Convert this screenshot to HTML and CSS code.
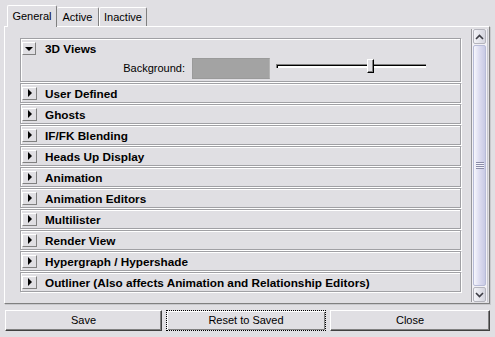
FILE: index.html
```html
<!DOCTYPE html>
<html>
<head>
<meta charset="utf-8">
<title>Preferences</title>
<link rel="stylesheet" href="styles.css">
</head>
<body>
	<div class="tabs">
		<div class="tab selected">General</div>
		<div class="tab tab_active">Active</div>
		<div class="tab tab_inactive">Inactive</div>
	</div>
	<div class="panel">
		<div class="frames">
			<div class="frame open">
				<div class="frame_title">
					<span class="toggle"><span class="arrow_down"></span></span>
					<span class="label">3D Views</span>
				</div>
				<div class="frame_body">
					<span class="field_label">Background:</span>
					<span class="swatch"></span>
					<span class="slider">
						<span class="track"></span>
						<span class="thumb"></span>
					</span>
				</div>
			</div>
			<div class="frame"><div class="frame_title"><span class="toggle"><span class="arrow_right"></span></span><span class="label">User Defined</span></div></div>
			<div class="frame"><div class="frame_title"><span class="toggle"><span class="arrow_right"></span></span><span class="label">Ghosts</span></div></div>
			<div class="frame"><div class="frame_title"><span class="toggle"><span class="arrow_right"></span></span><span class="label">IF/FK Blending</span></div></div>
			<div class="frame"><div class="frame_title"><span class="toggle"><span class="arrow_right"></span></span><span class="label">Heads Up Display</span></div></div>
			<div class="frame"><div class="frame_title"><span class="toggle"><span class="arrow_right"></span></span><span class="label">Animation</span></div></div>
			<div class="frame"><div class="frame_title"><span class="toggle"><span class="arrow_right"></span></span><span class="label">Animation Editors</span></div></div>
			<div class="frame"><div class="frame_title"><span class="toggle"><span class="arrow_right"></span></span><span class="label">Multilister</span></div></div>
			<div class="frame"><div class="frame_title"><span class="toggle"><span class="arrow_right"></span></span><span class="label">Render View</span></div></div>
			<div class="frame"><div class="frame_title"><span class="toggle"><span class="arrow_right"></span></span><span class="label">Hypergraph / Hypershade</span></div></div>
			<div class="frame"><div class="frame_title"><span class="toggle"><span class="arrow_right"></span></span><span class="label">Outliner (Also affects Animation and Relationship Editors)</span></div></div>
		</div>
		<div class="scrollbar">
			<div class="sb_button">
				<svg width="9" height="6" viewBox="0 0 9 6"><path d="M1 5 L4.5 1.5 L8 5" fill="none" stroke="#3c3c44" stroke-width="1.6"/></svg>
			</div>
			<div class="sb_thumb">
				<span class="grip"></span>
			</div>
			<div class="sb_button">
				<svg width="9" height="6" viewBox="0 0 9 6"><path d="M1 1 L4.5 4.5 L8 1" fill="none" stroke="#3c3c44" stroke-width="1.6"/></svg>
			</div>
		</div>
	</div>
	<div class="buttons">
		<div class="button save">Save</div>
		<div class="button default">Reset to Saved</div>
		<div class="button close">Close</div>
	</div>
</body>
</html>
```

FILE: styles.css
```css
* {box-sizing:border-box;}
body {margin:0; background:#e0dfe3; font-family:"Liberation Sans",Arial,sans-serif; font-size:11px; color:#000; height:337px; overflow:hidden;}

.tabs {display:flex; align-items:flex-end; height:26px; padding-left:7px; position:relative; z-index:1;}
.tab {height:19px; padding-top:3px; text-align:center; border:1px solid #fff; border-bottom:none; border-right:1px solid #808080; border-radius:2px 2px 0 0; background:#e0dfe3;}
.tab.selected {width:50px; height:22px; padding-top:4px; margin-bottom:-1px;}
.tab_active {width:42px; border-left:none;}
.tab_inactive {width:48px;}

.panel {display:flex; margin-left:4px; width:486px; height:278px; border:1px solid #fff; border-right-color:#808080; border-bottom-color:#808080; box-shadow:1px 1px 0 #c8c8cc;}
.frames {width:441px; margin-left:15px; padding-top:11px;}

.frame {height:20px; margin-bottom:1px; border:1px solid #a0a0a4; box-shadow:inset 1px 1px 0 #fff, 1px 1px 0 #fff;}
.frame.open {height:44px;}
.frame_title {display:flex; align-items:center; height:18px; padding-left:1px;}
.toggle {display:flex; align-items:center; justify-content:center; width:15px; height:13px; border:1px solid #fff; border-right-color:#808080; border-bottom-color:#808080;}
.open .toggle {width:14px; height:13px; margin-top:1px;}
.arrow_right {width:0; height:0; border-left:4px solid #000; border-top:4px solid transparent; border-bottom:4px solid transparent; margin-left:1px;}
.arrow_down {width:0; height:0; border-top:4px solid #000; border-left:4px solid transparent; border-right:4px solid transparent; margin-top:1px;}
.label {margin-left:8px; font-weight:bold; font-size:11.75px; white-space:nowrap;}
.open .label {margin-left:9px;}

.frame_body {display:flex; align-items:center; height:22px;}
.field_label {width:164px; text-align:right;}
.swatch {width:78px; height:21px; margin-left:7px; background:#a3a3a3; border:1px solid #9a9a9a; border-right-color:#b4b4b4;}
.slider {position:relative; width:150px; height:21px; margin-left:6px;}
.track {display:block; margin-top:6px; height:4px; border-top:1px solid #808080; border-left:1px solid #808080; background:#fff; box-shadow:inset 1px 1px 0 #000;}
.thumb {position:absolute; left:91px; top:1px; width:7px; height:14px; background:#e0dfe3; border:1px solid #fff; border-right-color:#000; border-bottom-color:#000; box-shadow:inset -1px -1px 0 #808080;}

.scrollbar {display:flex; flex-direction:column; width:17px; margin:2px 1px 1px auto; border-left:1px solid #98989c; border-right:1px solid #c8c8d0; background:#f2f1f5;}
.sb_button {display:flex; align-items:center; justify-content:center; height:15px; margin:0 1px; border:1px solid #b4b4bc; border-radius:2px; background:linear-gradient(to right,#f4f4f8,#d4d4de);}
.sb_thumb {flex:1; display:flex; align-items:center; justify-content:center; margin:1px 1px; border:1px solid #b8bcd8; border-radius:2px; background:linear-gradient(to right,#f6f6fc,#dcdcf0 50%,#c8cae4);}
.grip {width:8px; height:7px; background:repeating-linear-gradient(to bottom,#8a8ca8 0 1px,#f4f4fc 1px 2px);}

.buttons {display:flex; gap:4px; margin:6px 5px 0 5px;}
.button {height:21px; line-height:19px; text-align:center; border:1px solid #fff; border-right-color:#404040; border-bottom-color:#404040; box-shadow:inset -1px -1px 0 #808080;}
.button.save {width:157px;}
.button.default {width:160px; border:1px dotted #000; box-shadow:inset 1px 1px 0 #fff, inset -1px -1px 0 #808080;}
.button.close {flex:1;}
```
